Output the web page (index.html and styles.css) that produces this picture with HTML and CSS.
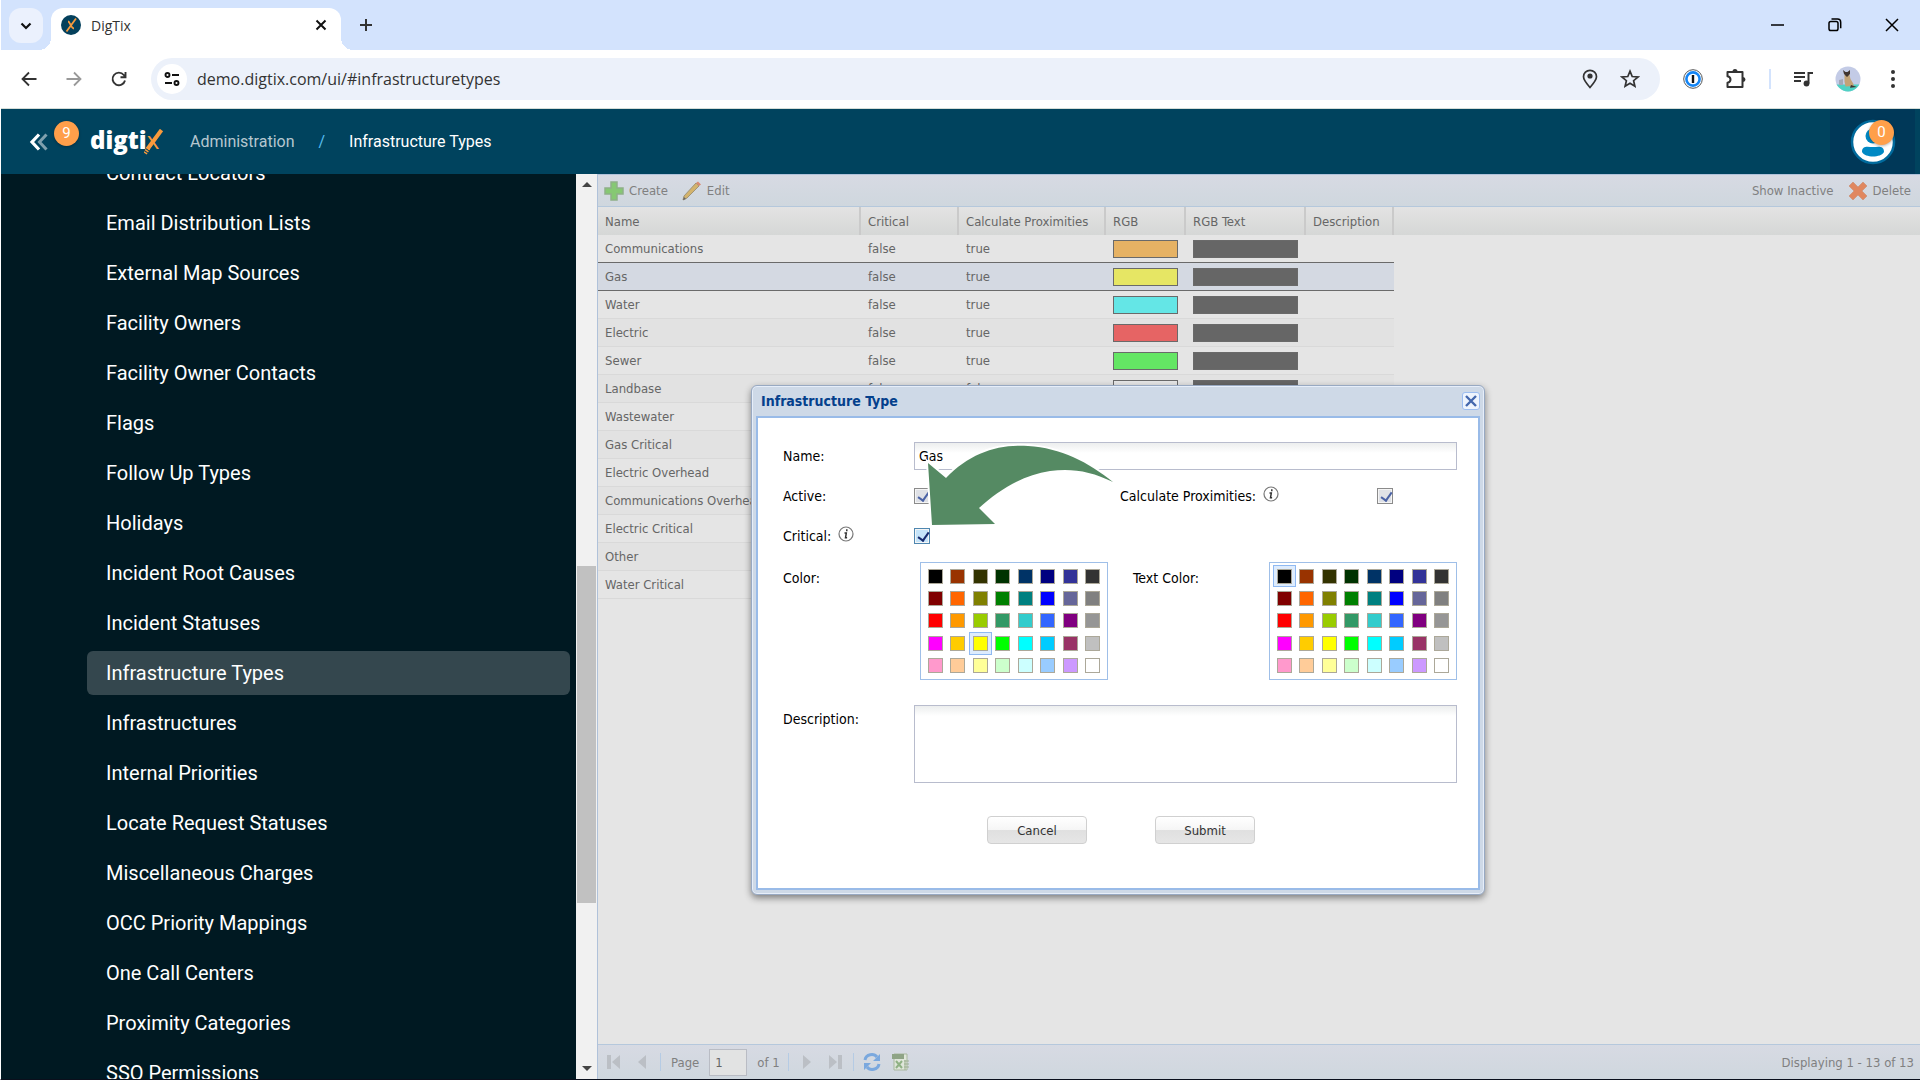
FILE: index.html
```
<!DOCTYPE html>
<html lang="en">
	<head>
		<meta charset="UTF-8">
		<title>DigTix</title>
		<link rel="stylesheet" href="styles.css">
	</head>
	<body>
		<div class="tabstrip">
			<button class="tabsearch" aria-label="Search tabs">
				<svg width="16" height="16" viewBox="0 0 16 16"><path d="M3.500 5.500 8 10l4.500-4.500" fill="none" stroke="#111" stroke-width="2.200"/></svg>
			</button>
			<div class="tab">
				<svg width="20" height="20" viewBox="0 0 20 20"><circle cx="10" cy="10" r="10" fill="#04405c"/><path d="M15 3.500 5.500 16.500M7 6.500c2 0 3 7 6 7" fill="none" stroke="#f79a3e" stroke-width="1.800"/></svg>
				<span class="tabtitle">DigTix</span>
				<button class="tabclose" aria-label="Close tab">
					<svg width="12" height="12" viewBox="0 0 12 12"><path d="M1.500 1.500l9 9M10.500 1.500l-9 9" stroke="#111" stroke-width="2"/></svg>
				</button>
			</div>
			<button class="newtab" aria-label="New tab">
				<svg width="14" height="14" viewBox="0 0 14 14"><path d="M7 1v12M1 7h12" stroke="#333" stroke-width="2"/></svg>
			</button>
			<div class="wincontrols">
				<button aria-label="Minimize"><svg width="14" height="14" viewBox="0 0 14 14"><path d="M0 7h13" stroke="#000" stroke-width="1.500"/></svg></button>
				<button aria-label="Restore"><svg width="14" height="14" viewBox="0 0 14 14"><rect x="1" y="3.500" width="9" height="9" rx="1.800" fill="none" stroke="#000" stroke-width="1.500"/><path d="M3.500 1h6a3.200 3.200 0 0 1 3.200 3.200v6" fill="none" stroke="#000" stroke-width="1.500"/></svg></button>
				<button aria-label="Close"><svg width="14" height="14" viewBox="0 0 14 14"><path d="M1 1l12 12M13 1 1 13" stroke="#000" stroke-width="1.500"/></svg></button>
			</div>
		</div>
		<div class="toolbar">
			<button class="navbtn" aria-label="Back"><svg width="16" height="16" viewBox="0 0 16 16"><path d="M15.500 8H2M8 1.500 1.500 8 8 14.500" fill="none" stroke="#333" stroke-width="1.800"/></svg></button>
			<button class="navbtn" aria-label="Forward"><svg width="16" height="16" viewBox="0 0 16 16"><path d="M.5 8H14M8 1.500 14.500 8 8 14.500" fill="none" stroke="#999" stroke-width="1.800"/></svg></button>
			<button class="navbtn" aria-label="Reload"><svg width="16" height="16" viewBox="0 0 16 16"><path d="M14 9.500A6.300 6.300 0 1 1 12.800 4l1.500 1.800M9.500 6.300h5V1" fill="none" stroke="#333" stroke-width="1.900"/></svg></button>
			<div class="omnibox">
				<span class="siteinfo"><svg width="16" height="16" viewBox="0 0 16 16"><g fill="none" stroke="#111" stroke-width="1.900"><circle cx="3.500" cy="4" r="2"/><path d="M8 4h7M1 12h7"/><circle cx="12.500" cy="12" r="2"/></g></svg></span>
				<input class="url" type="text" aria-label="Address" value="demo.digtix.com/ui/#infrastructuretypes">
				<button aria-label="Location"><svg width="20" height="20" viewBox="0 0 20 20"><path d="M10 18.500C6 14 3.500 10.800 3.500 7.800a6.500 6.500 0 0 1 13 0c0 3-2.500 6.200-6.500 10.700z" fill="none" stroke="#333" stroke-width="1.700"/><circle cx="10" cy="7" r="2.600" fill="#333"/></svg></button>
				<button aria-label="Bookmark"><svg width="20" height="20" viewBox="0 0 20 20"><path d="M10 2.200l2.200 5.300 5.800.5-4.400 3.700 1.300 5.600L10 14.300l-4.900 3 1.300-5.600L2 8l5.800-.5z" fill="none" stroke="#333" stroke-width="1.700"/></svg></button>
			</div>
			<div class="extensions">
				<svg width="20" height="20" viewBox="0 0 20 20"><circle cx="10" cy="10" r="9.300" fill="#fff" stroke="#555" stroke-width="1"/><circle cx="10" cy="10" r="6.600" fill="#fff" stroke="#1485f5" stroke-width="2.600"/><path d="M10 6v8" stroke="#111" stroke-width="2.400"/></svg>
				<svg width="22" height="22" viewBox="0 0 22 22"><path d="M2.500 4h15v15h-15v-4.200c4-.8 4-5.800 0-6.600z" fill="none" stroke="#333" stroke-width="2" stroke-linejoin="round"/><path d="M7.500 3.500a2.500 2.500 0 0 1 5 0zM18 9a2.500 2.500 0 0 1 0 5z" fill="#333"/></svg>
				<span class="divider"></span>
				<svg width="20" height="20" viewBox="0 0 20 20"><path d="M1 4h11M1 8h11M1 12h7" stroke="#333" stroke-width="1.800"/><path d="M15.500 14.500V4H20" fill="none" stroke="#333" stroke-width="2"/><circle cx="13.500" cy="14.500" r="2.900" fill="#333"/></svg>
				<svg width="26" height="26" viewBox="0 0 26 26"><clipPath id="face"><circle cx="13" cy="13" r="12.500"/></clipPath><g clip-path="url(#face)"><path d="M0 0h26v26H0z" fill="#c3cbe6"/><path d="M0 18.500h26V26H0z" fill="#4fd2c4"/><path d="M4 14l4-1v6H4z" fill="#a3a9b8"/><path d="M9.500 9h5l1 4 3 5v2l-8 .5-1-5z" fill="#c3a376"/><path d="M8 4l2.500 2h2L15 4v4l-3 3-3-3z" fill="#40342f"/><path d="M16 19l6 2-7 .8z" fill="#40342f"/></g></svg>
				<svg width="20" height="20" viewBox="0 0 20 20"><g fill="#333"><circle cx="10" cy="3" r="2"/><circle cx="10" cy="10" r="2"/><circle cx="10" cy="17" r="2"/></g></svg>
			</div>
		</div>

		<header class="appbar">
			<button class="collapse" aria-label="Collapse menu"><svg width="20" height="18" viewBox="0 0 20 18"><path d="M17.500 1.500 10.500 9l7 7.500" fill="none" stroke="#7fa0ae" stroke-width="3"/><path d="M10 1.500 3 9l7 7.500" fill="none" stroke="#fff" stroke-width="3.200"/></svg></button>
			<span class="badge">9</span>
			<a class="logo" href="#">digti<span class="logox">x<svg width="20" height="26" viewBox="0 0 20 26"><path d="M17.500 1 3.500 20" stroke="#f99a3c" stroke-width="4"/><path d="M4.500 19 1 24.500" stroke="#f99a3c" stroke-width="4" stroke-dasharray="1.500 1"/></svg></span></a>
			<nav class="crumbs">
				<a href="#">Administration</a>
				<span class="slash">/</span>
				<a class="current" href="#">Infrastructure Types</a>
			</nav>
			<button class="user" aria-label="Account">
				<svg width="46" height="46" viewBox="0 0 46 46"><circle cx="23" cy="23" r="21" fill="#fff" stroke="#006a9c" stroke-width="2.500"/><circle cx="23" cy="17" r="7.500" fill="#0089c4"/><path d="M12 33c0-7 6-5 11-5s11-2 11 5c-3 6-19 6-22 0z" fill="#0089c4"/></svg>
				<span class="badge userbadge">0</span>
			</button>
		</header>

		<div class="main">
			<nav class="sidebar">
				<ul class="menu">
					<li><a href="#">Contract Locators</a></li>
					<li><a href="#">Email Distribution Lists</a></li>
					<li><a href="#">External Map Sources</a></li>
					<li><a href="#">Facility Owners</a></li>
					<li><a href="#">Facility Owner Contacts</a></li>
					<li><a href="#">Flags</a></li>
					<li><a href="#">Follow Up Types</a></li>
					<li><a href="#">Holidays</a></li>
					<li><a href="#">Incident Root Causes</a></li>
					<li><a href="#">Incident Statuses</a></li>
					<li><a class="active" href="#">Infrastructure Types</a></li>
					<li><a href="#">Infrastructures</a></li>
					<li><a href="#">Internal Priorities</a></li>
					<li><a href="#">Locate Request Statuses</a></li>
					<li><a href="#">Miscellaneous Charges</a></li>
					<li><a href="#">OCC Priority Mappings</a></li>
					<li><a href="#">One Call Centers</a></li>
					<li><a href="#">Proximity Categories</a></li>
					<li><a href="#">SSO Permissions</a></li>
				</ul>
			</nav>
			<div class="scrollbar">
				<span class="arrow up"></span>
				<span class="thumb"></span>
				<span class="arrow down"></span>
			</div>

			<section class="panel">
				<div class="gridbar">
					<button><svg width="20" height="20" viewBox="0 0 20 20"><path d="M7 1h6v6h6v6h-6v6H7v-6H1V7h6z" fill="#86c873" stroke="#8fb088" stroke-width="1.500"/></svg>Create</button>
					<button><svg width="20" height="20" viewBox="0 0 20 20"><path d="M2 15 14 2l3 3L5 17l-4 2z" fill="#d3b36c" stroke="#a09478" stroke-width="1"/><path d="M14 2l2-1.500 3 3L17 5z" fill="#d98a70"/><path d="M1 19l1-3 2 2z" fill="#666"/></svg>Edit</button>
					<button class="right">Show Inactive</button>
					<button><svg width="20" height="20" viewBox="0 0 20 20"><path d="M5 1 10 6l5-5 4 4-5 5 5 5-4 4-5-5-5 5-4-4 5-5-5-5z" fill="#e0875f" stroke="#cf9a83" stroke-width="1"/></svg>Delete</button>
				</div>
				<div class="gridwrap">
					<table class="grid">
						<colgroup>
							<col class="c-name"><col class="c-crit"><col class="c-prox"><col class="c-rgb"><col class="c-text"><col class="c-desc">
						</colgroup>
						<thead>
							<tr><th>Name</th><th>Critical</th><th>Calculate Proximities</th><th>RGB</th><th>RGB Text</th><th>Description</th></tr>
						</thead>
						<tbody id="rows"></tbody>
					</table>
				</div>
				<div class="pager">
					<button aria-label="First page"><svg width="14" height="14" viewBox="0 0 14 14"><path d="M0 0h4v14H0zM13 0v14L5 7z" fill="#bbbfc5"/></svg></button>
					<button aria-label="Previous page"><svg width="14" height="14" viewBox="0 0 14 14"><path d="M11 0v14L3 7z" fill="#bbbfc5"/></svg></button>
					<span class="sep"></span>
					<label for="page">Page</label>
					<input type="text" id="page" value="1">
					<span class="of">of 1</span>
					<span class="sep"></span>
					<button aria-label="Next page"><svg width="14" height="14" viewBox="0 0 14 14"><path d="M3 0v14l8-7z" fill="#bbbfc5"/></svg></button>
					<button aria-label="Last page"><svg width="14" height="14" viewBox="0 0 14 14"><path d="M1 0v14l8-7zM10 0h4v14h-4z" fill="#bbbfc5"/></svg></button>
					<span class="sep"></span>
					<button class="wide" aria-label="Refresh"><svg width="20" height="20" viewBox="0 0 20 20"><g fill="none" stroke="#7aa8de" stroke-width="3"><path d="M3 8c1-6 9-7 12-3"/><path d="M17 12c-1 6-9 7-12 3"/></g><path d="M18 2v7h-7zM2 18v-7h7z" fill="#7aa8de"/></svg></button>
					<button class="wide" aria-label="Export"><svg width="20" height="20" viewBox="0 0 20 20"><path d="M3 2h13v16H3z" fill="#dfe6da" stroke="#a9b89f"/><path d="M1 2h12v5H1z" fill="#8fa486"/><path d="M5 9l6 7M11 9l-6 7" stroke="#8fb184" stroke-width="2"/><path d="M13 9h5M13 12h5M13 15h5M14 8v10" stroke="#9db092"/></svg></button>
					<span class="total">Displaying 1 - 13 of 13</span>
				</div>
			</section>
		</div>

		<form class="dialog" role="dialog" aria-labelledby="dlgtitle">
			<div class="dlghead">
				<h2 id="dlgtitle">Infrastructure Type</h2>
				<button type="button" class="dlgclose" aria-label="Close"><svg width="12" height="12" viewBox="0 0 12 12"><path d="M1 1l10 10M11 1 1 11" stroke="#4467ad" stroke-width="2.400"/></svg></button>
			</div>
			<div class="dlgbody">
				<div class="row">
					<label class="lbl" for="name">Name:</label>
					<input type="text" id="name" value="Gas">
				</div>
				<div class="row">
					<label class="lbl" for="active">Active:</label>
					<span class="half"><input type="checkbox" id="active" checked></span>
					<label class="lbl wide" for="prox">Calculate Proximities:<svg class="info" width="16" height="16" viewBox="0 0 16 16"><circle cx="8" cy="8" r="7" fill="#fff" stroke="#777" stroke-width="1.200"/><path d="M8.800 3.200v2M6.500 7h1.800l-.8 4.800h1.600" fill="none" stroke="#333" stroke-width="1.500"/></svg></label>
					<input type="checkbox" id="prox" checked>
				</div>
				<div class="row">
					<label class="lbl" for="critical">Critical:<svg class="info" width="16" height="16" viewBox="0 0 16 16"><circle cx="8" cy="8" r="7" fill="#fff" stroke="#777" stroke-width="1.200"/><path d="M8.800 3.200v2M6.500 7h1.800l-.8 4.800h1.600" fill="none" stroke="#333" stroke-width="1.500"/></svg></label>
					<input type="checkbox" id="critical" class="hover" checked>
				</div>
				<div class="row colors">
					<span class="lbl" id="colorlbl">Color:</span>
					<div class="palette" role="group" aria-labelledby="colorlbl" data-selected="FFFF00"></div>
					<span class="lbl" id="textlbl">Text Color:</span>
					<div class="palette" role="group" aria-labelledby="textlbl" data-selected="000000"></div>
				</div>
				<div class="row desc">
					<label class="lbl" for="description">Description:</label>
					<textarea id="description"></textarea>
				</div>
				<div class="buttons">
					<button type="button">Cancel</button>
					<button type="submit">Submit</button>
				</div>
			</div>
			<svg class="pointer" width="205" height="96" viewBox="0 0 205 96"><path d="M8 28 26 43C50 18 78 9 108 11c33 2 60 16 85 36-22-11-42-14-63-11C102 40 78 56 59 73l16 16-63 1z" fill="#fff" stroke="#fff" stroke-width="4"/><path d="M8 28 26 43C50 18 78 9 108 11c33 2 60 16 85 36-22-11-42-14-63-11C102 40 78 56 59 73l16 16-63 1z" fill="#558a63"/></svg>
		</form>
		<script src="script.js"></script>
	</body>
</html>
```
FILE: script.js
```
var types = [
	['Communications', 'false', 'true', '#e6b264'],
	['Gas', 'false', 'true', '#e6e664'],
	['Water', 'false', 'true', '#64e6e6'],
	['Electric', 'false', 'true', '#e66464'],
	['Sewer', 'false', 'true', '#64e664'],
	['Landbase', 'false', 'false', '#e6e6e6'],
	['Wastewater', 'false', 'true', '#64e664'],
	['Gas Critical', 'true', 'true', '#e6e664'],
	['Electric Overhead', 'false', 'true', '#e66464'],
	['Communications Overhead', 'false', 'true', '#e6b264'],
	['Electric Critical', 'true', 'true', '#e66464'],
	['Other', 'false', 'true', '#e6e6e6'],
	['Water Critical', 'true', 'true', '#64e6e6']
];
var colors = ('000000 993300 333300 003300 003366 000080 333399 333333 ' +
	'800000 FF6600 808000 008000 008080 0000FF 666699 808080 ' +
	'FF0000 FF9900 99CC00 339966 33CCCC 3366FF 800080 969696 ' +
	'FF00FF FFCC00 FFFF00 00FF00 00FFFF 00CCFF 993366 C0C0C0 ' +
	'FF99CC FFCC99 FFFF99 CCFFCC CCFFFF 99CCFF CC99FF FFFFFF').split(' ');

types.forEach(function(t){
	var tr = document.createElement('tr');
	if(t[0] === 'Gas'){
		tr.className = 'selected';
	}
	tr.innerHTML = '<td>' + t[0] + '</td><td>' + t[1] + '</td><td>' + t[2] + '</td>' +
		'<td><div class="swatch" style="background-color: ' + t[3] + '"></div></td>' +
		'<td><div class="swatch dark"></div></td><td></td>';
	document.getElementById('rows').appendChild(tr);
});

document.querySelectorAll('.palette').forEach(function(palette){
	colors.forEach(function(c){
		var btn = document.createElement('button');
		btn.type = 'button';
		btn.setAttribute('aria-label', '#' + c);
		if(c === palette.dataset.selected){
			btn.className = 'selected';
		}
		btn.innerHTML = '<span style="background-color: #' + c + '"></span>';
		palette.appendChild(btn);
	});
});
```
FILE: styles.css
```
* {
	box-sizing: border-box;
	margin: 0;
	padding: 0;
}
body {
	position: relative;
	display: flex;
	flex-direction: column;
	height: 100vh;
	overflow: hidden;
	border-left: 1px solid #fff;
	border-bottom: 1px solid #0a0f1c;
	font-family: "DejaVu Sans Condensed", "Noto Sans", sans-serif;
	font-size: 13px;
}
button {
	border: none;
	background: none;
	font-family: inherit;
	cursor: pointer;
}
a {
	text-decoration: none;
}
svg {
	display: block;
	flex: none;
}

/* browser chrome */
.tabstrip {
	display: flex;
	align-items: flex-start;
	height: 50px;
	flex: none;
	background-color: #d3e3fd;
	padding: 8px 0 0 8px;
}
.tabstrip button {
	display: flex;
	align-items: center;
	justify-content: center;
}
.tabsearch {
	width: 34px;
	height: 35px;
	border-radius: 12px;
	background-color: #ebf1fd;
}
.tab {
	position: relative;
	display: flex;
	align-items: center;
	width: 290px;
	height: 42px;
	margin-left: 8px;
	padding: 0 14px 8px 10px;
	border-radius: 12px 12px 0 0;
	background-color: #fff;
}
.tab::before,
.tab::after {
	content: "";
	position: absolute;
	bottom: 0;
	width: 12px;
	height: 12px;
}
.tab::before {
	left: -12px;
	background: radial-gradient(circle at 0 0, transparent 12px, #fff 12px);
}
.tab::after {
	right: -12px;
	background: radial-gradient(circle at 100% 0, transparent 12px, #fff 12px);
}
.tabtitle {
	flex: 1;
	margin-left: 10px;
	font-family: "Open Sans", sans-serif;
	font-size: 14px;
	color: #333;
}
.newtab {
	width: 34px;
	height: 34px;
	margin-left: 8px;
}
.wincontrols {
	display: flex;
	margin-left: auto;
}
.wincontrols button {
	width: 57px;
	height: 34px;
}
.toolbar {
	display: flex;
	align-items: center;
	height: 59px;
	flex: none;
	padding-left: 5px;
	background-color: #fff;
	border-bottom: 1px solid #d5ddd8;
}
.navbtn {
	display: flex;
	justify-content: center;
	width: 45px;
}
.omnibox {
	display: flex;
	align-items: center;
	flex: 1;
	height: 42px;
	margin-left: 10px;
	padding: 0 20px 0 6px;
	border-radius: 21px;
	background-color: #ecf1fa;
}
.siteinfo {
	display: flex;
	align-items: center;
	justify-content: center;
	width: 30px;
	height: 30px;
	border-radius: 50%;
	background-color: #fff;
}
.url {
	flex: 1;
	margin-left: 10px;
	border: none;
	background: none;
	font-family: "Open Sans", sans-serif;
	font-size: 16px;
	color: #333;
}
.omnibox button {
	margin-left: 20px;
}
.extensions {
	display: flex;
	align-items: center;
	gap: 22px;
	padding: 0 17px 0 23px;
}
.divider {
	width: 2px;
	height: 20px;
	background-color: #d3e3fd;
}

/* app header */
.appbar {
	display: flex;
	align-items: center;
	height: 65px;
	flex: none;
	padding-left: 28px;
	background-color: #00435e;
	font-family: Roboto, sans-serif;
}
.badge {
	width: 25px;
	height: 25px;
	border-radius: 50%;
	background-color: #ff9f4a;
	box-shadow: 0 1px 3px rgba(0, 0, 0, 0.3);
	color: #fff;
	font-size: 15px;
	line-height: 25px;
	text-align: center;
}
.collapse + .badge {
	margin: 0 11px 16px 5px;
}
.logo {
	width: 72px;
	padding-bottom: 4px;
	font-family: "Open Sans", sans-serif;
	font-size: 24px;
	font-weight: 800;
	line-height: 32px;
	color: #fff;
}
.logox {
	position: relative;
	font-weight: 400;
	color: #f99a3c;
}
.logox svg {
	position: absolute;
	left: -3px;
	top: 6px;
}
.crumbs {
	display: flex;
	flex: 1;
	margin-left: 28px;
	font-size: 16px;
}
.crumbs a {
	color: #b5c7cf;
}
.crumbs .slash {
	margin: 0 24px;
	color: #57bdf0;
}
.crumbs .current {
	color: #fff;
}
.user {
	position: relative;
	display: flex;
	align-items: center;
	justify-content: center;
	width: 85px;
	height: 65px;
	margin-right: 5px;
	background-color: #003858;
}
.userbadge {
	position: absolute;
	left: 39px;
	top: 11px;
}

/* sidebar */
.main {
	display: flex;
	flex: 1;
	min-height: 0;
}
.sidebar {
	width: 575px;
	overflow: hidden;
	background-color: #001922;
}
.menu {
	list-style: none;
	margin: -23px 6px 0 86px;
}
.menu a {
	display: block;
	height: 44px;
	margin-bottom: 6px;
	padding-left: 19px;
	border-radius: 6px;
	font-family: Roboto, sans-serif;
	font-size: 20px;
	line-height: 44px;
	color: #fff;
}
.menu .active {
	background-color: #34474e;
}
.scrollbar {
	display: flex;
	flex-direction: column;
	align-items: center;
	width: 21px;
	padding: 8px 0;
	background-color: #f1f1f1;
}
.thumb {
	flex: none;
	width: 19px;
	height: 337px;
	margin-top: 379px;
	background-color: #c1c1c1;
}
.arrow {
	border: 5px solid transparent;
}
.up {
	border-bottom-color: #444;
	border-top: none;
}
.down {
	margin-top: auto;
	border-top-color: #444;
	border-bottom: none;
}

/* grid */
.panel {
	display: flex;
	flex-direction: column;
	flex: 1;
	border-top: 1px solid #b0c2da;
	border-left: 1px solid #b0c2da;
	background-color: #e5e5e5;
	color: #666;
}
.gridbar,
.pager {
	display: flex;
	align-items: center;
	background-image: linear-gradient(#d7dae3, #cfd7de);
}
.gridbar {
	height: 32px;
	padding: 0 9px 0 6px;
	gap: 14px;
	border-bottom: 1px solid #b5c8dc;
}
.gridbar button {
	display: flex;
	align-items: center;
	gap: 5px;
	font-size: 13px;
	color: #808080;
}
.gridbar .right {
	margin-left: auto;
}
.gridwrap {
	flex: 1;
	background: linear-gradient(#e3e3e3, #d5d7d6) no-repeat;
	background-size: 100% 28px;
}
.grid {
	table-layout: fixed;
	width: 796px;
	border-collapse: separate;
	border-spacing: 0;
}
.c-name {
	width: 263px;
}
.c-crit {
	width: 98px;
}
.c-prox {
	width: 147px;
}
.c-rgb {
	width: 80px;
}
.c-text {
	width: 120px;
}
.c-desc {
	width: 88px;
}
.grid th {
	height: 28px;
	padding-left: 7px;
	border-right: 2px solid #cacaca;
	font-weight: normal;
	text-align: left;
	white-space: nowrap;
}
.grid td {
	height: 28px;
	padding: 0 7px;
	border-bottom: 1px solid #d9d9d9;
	overflow: hidden;
	white-space: nowrap;
}
.grid tr:nth-child(even) td {
	background-color: #e2e2e2;
}
.grid tbody tr:first-child td {
	border-bottom-color: #6a6a6a;
}
.grid tbody tr.selected td {
	background-color: #d4d9e2;
	border-bottom-color: #6a6a6a;
}
.swatch {
	width: 65px;
	height: 18px;
	border: 1px solid #6a6a6a;
}
.swatch.dark {
	width: 105px;
	background-color: #666;
}
.pager {
	height: 35px;
	padding: 0 6px 0 2px;
	border-top: 1px solid #b5c8dc;
	color: #808080;
}
.pager button {
	display: flex;
	justify-content: center;
	width: 28px;
}
.pager .wide {
	width: 29px;
}
.sep {
	width: 1px;
	height: 18px;
	margin: 0 4px;
	background-color: #b5cbe4;
}
.pager label {
	margin-left: 6px;
}
.pager input {
	width: 38px;
	height: 27px;
	margin: 0 10px;
	padding-left: 5px;
	border: 1px solid #b9bcc4;
	background-color: #e2e3e3;
	font: inherit;
	color: #666;
}
.of {
	margin-right: 4px;
}
.total {
	margin-left: auto;
}

/* dialog */
.dialog {
	position: absolute;
	left: 750px;
	top: 385px;
	width: 734px;
	padding: 0 4px 4px;
	border: 1px solid #98a9c2;
	border-radius: 6px;
	background-color: #ced9e7;
	box-shadow: inset 0 0 0 1px #e6eefa, 0 3px 7px rgba(0, 0, 0, 0.45);
	font-size: 14px;
	color: #000;
}
.dlghead {
	display: flex;
	align-items: center;
	justify-content: space-between;
	height: 30px;
	padding-left: 5px;
}
.dlghead h2 {
	font-size: 14px;
	color: #04408c;
}
.dlgclose {
	display: flex;
	align-items: center;
	justify-content: center;
	width: 18px;
	height: 18px;
	border: 1px solid #9cbdf0;
	border-radius: 3px;
	background-color: #eef4fd;
}
.dlgbody {
	padding: 24px 21px 44px 25px;
	border: 2px solid #99bbe8;
	background-color: #fff;
}
.row {
	display: flex;
	align-items: center;
	min-height: 28px;
	margin-bottom: 12px;
}
.lbl {
	display: flex;
	width: 131px;
	line-height: 28px;
}
.lbl.wide {
	width: 257px;
}
.half {
	display: flex;
	width: 206px;
}
.info {
	margin: 4px 0 0 7px;
}
.row input[type="text"],
.row textarea {
	flex: 1;
	height: 28px;
	padding-left: 4px;
	border: 1px solid #b8bccd;
	background: linear-gradient(#eceeee, #fff 10px);
	font: inherit;
	resize: none;
}
.row input[type="checkbox"] {
	appearance: none;
	position: relative;
	width: 16px;
	height: 16px;
	border: 1px solid #8b8b8b;
	background-color: #dfe1e6;
	box-shadow: inset 0 0 0 1px #f5f5f5;
}
.row input[type="checkbox"]::after {
	content: "";
	position: absolute;
	left: 5px;
	top: 1px;
	width: 5px;
	height: 9px;
	border: solid #4a62a5;
	border-width: 0 2px 2px 0;
	transform: rotate(35deg);
}
.row input.hover {
	border-color: #4f87b0;
	background-color: #c5e4fa;
}
.row input.hover::after {
	border-color: #16296e;
}
.colors {
	align-items: flex-start;
	margin-bottom: 25px;
}
.colors .lbl {
	padding-top: 2px;
}
.palette {
	display: grid;
	grid-template-columns: repeat(8, 1fr);
	grid-template-rows: repeat(5, 1fr);
	width: 188px;
	height: 118px;
	margin-left: 6px;
	padding: 2px 3px;
	border: 1px solid #9fbfe8;
}
.palette + .lbl {
	width: 157px;
	padding-left: 25px;
}
.colors .palette:last-child {
	margin-left: auto;
}
.palette button {
	display: flex;
	align-items: center;
	justify-content: center;
	border: 1px solid transparent;
}
.palette .selected {
	border-color: #8fb9f2;
	background-color: #deecfd;
}
.palette span {
	width: 15px;
	height: 15px;
	border: 1px solid #aca899;
}
.desc {
	align-items: flex-start;
	margin-bottom: 33px;
}
.row textarea {
	height: 78px;
}
.buttons {
	display: flex;
	gap: 68px;
	padding-left: 204px;
}
.buttons button {
	width: 100px;
	height: 28px;
	border: 1px solid #d0d0d0;
	border-radius: 4px;
	background: linear-gradient(#fff, #f6f6f6 48%, #e0e0e0 52%, #e6e6e6);
	font-size: 13px;
	color: #333;
}
.pointer {
	position: absolute;
	left: 168px;
	top: 49px;
}
```
